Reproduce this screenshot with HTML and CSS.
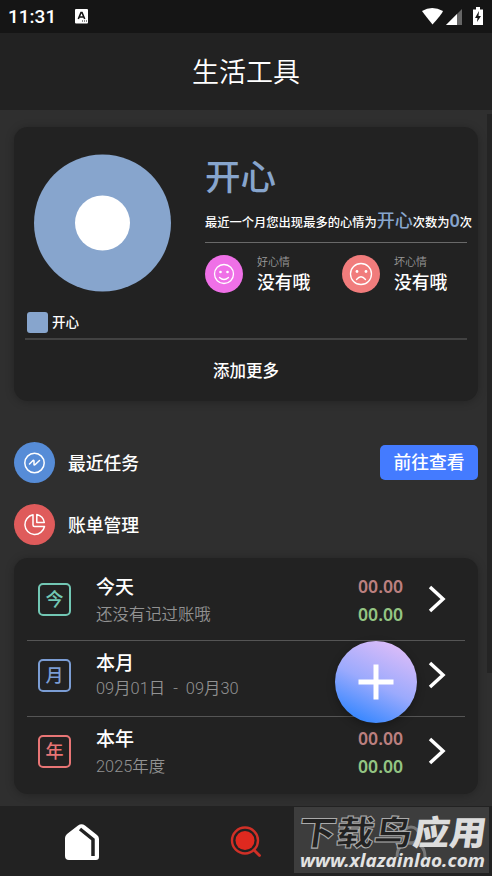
FILE: index.html
```html
<!DOCTYPE html>
<html lang="zh-CN">
<head>
<meta charset="utf-8">
<title>生活工具</title>
<link rel="stylesheet" href="styles.css">
</head>
<body>
<div class="app">
  <div class="status">
    <span class="clock">11:31</span>
    <svg class="keyboard" width="13" height="15" viewBox="0 0 13 15"><rect width="13" height="14.500" rx="1" fill="#fff"/><path d="M3.300 10 6 3.500h1L9.700 10M4.500 8h4" fill="none" stroke="#151515" stroke-width="1.600"/><path d="M7 12h1M9 12h1M11 12h1" stroke="#151515"/></svg>
    <svg class="signals" width="64" height="20" viewBox="0 0 64 20"><path d="M1 4Q11-2 22 4Q21 7 11.500 17.500Q3 7 1 4Z" fill="#fff"/><path d="M25 18 41 2v16Z" fill="#666"/><path d="M25 18 36 7v11Z" fill="#fff"/><path d="M52 2.500h3V0h4v2.500h3V18H52Z" fill="#fff"/><path d="m58 4-4 7h2.500L56 15l4-6h-2.500Z" fill="#151515"/></svg>
  </div>
  <header class="header">生活工具</header>
  <main class="main">
    <section class="card mood">
      <div class="mood-top">
        <svg class="donut" width="138" height="138" viewBox="0 0 138 138"><circle cx="69.500" cy="69" r="68.500" fill="#87a5cd"/><circle cx="69.500" cy="69" r="27.500" fill="#fff"/></svg>
        <div class="summary">
          <div class="mood-name">开心</div>
          <div class="sentence">最近一个月您出现最多的心情为<b>开心</b>次数为<b class="zero">0</b>次</div>
          <div class="faces">
            <div class="face">
              <svg width="38" height="38" viewBox="0 0 38 38"><circle cx="19" cy="19" r="19" fill="#ef70e7"/><g fill="none" stroke="#fff" stroke-width="1.300" stroke-linecap="round"><circle cx="19" cy="19" r="9.500"/><path d="M14.500 22.500q4.500 4 9 0"/></g><circle cx="15.500" cy="17" r="1.300" fill="#fff"/><circle cx="22.500" cy="17" r="1.300" fill="#fff"/></svg>
              <div><p class="face-label">好心情</p><p class="face-value">没有哦</p></div>
            </div>
            <div class="face">
              <svg width="38" height="38" viewBox="0 0 38 38"><circle cx="19" cy="19" r="19" fill="#f17c7c"/><g fill="none" stroke="#fff" stroke-width="1.300" stroke-linecap="round"><circle cx="19" cy="19" r="10.500"/><path d="M14.500 24.500q4.500-5.500 9 0"/></g><circle cx="15" cy="16.500" r="1.400" fill="#fff"/><circle cx="24" cy="16.500" r="1.400" fill="#fff"/></svg>
              <div><p class="face-label">坏心情</p><p class="face-value">没有哦</p></div>
            </div>
          </div>
        </div>
      </div>
      <div class="legend"><i class="swatch"></i>开心</div>
      <div class="more">添加更多</div>
    </section>

    <div class="section tasks">
      <svg width="41" height="41" viewBox="0 0 41 41"><circle cx="20.500" cy="20.500" r="20.500" fill="#568cd7"/><g fill="none" stroke="#fff" stroke-width="1.500" stroke-linecap="round" stroke-linejoin="round"><circle cx="20.500" cy="21" r="9.700"/><path d="M15.500 22 19 18.500q1-.5 1 .5v3.500q.2 1 1 .3l4.500-4.300"/></g></svg>
      <h2>最近任务</h2><button class="go">前往查看</button>
    </div>
    <div class="section bills">
      <svg width="41" height="41" viewBox="0 0 41 41"><circle cx="20.500" cy="20.500" r="20.500" fill="#df5b5b"/><g fill="none" stroke="#fff" stroke-width="1.500" stroke-linejoin="round"><path d="M19 10.800a9.900 9.900 0 1 0 11.500 11.700H20.500q-1.500 0-1.500-1.500Z"/><path d="M22.800 10.500q6.500 1.500 7.500 8h-7.500Z"/></g></svg>
      <h2>账单管理</h2>
    </div>

    <section class="card ledger">
      <div class="row">
        <span class="tile today">今</span>
        <div class="info"><h3>今天</h3><p>还没有记过账哦</p></div>
        <div class="amounts"><span class="out">00.00</span><span class="in">00.00</span></div>
        <svg class="chevron" width="18" height="28" viewBox="0 0 18 28"><path d="m2 2 13 12L2 26"/></svg>
      </div>
      <div class="row">
        <span class="tile month">月</span>
        <div class="info range"><h3>本月</h3><p>09月01日&nbsp; -&nbsp; 09月30</p></div>
        <div class="amounts"><span class="out">00.00</span><span class="in">00.00</span></div>
        <svg class="chevron" width="18" height="28" viewBox="0 0 18 28"><path d="m2 2 13 12L2 26"/></svg>
      </div>
      <div class="row">
        <span class="tile year">年</span>
        <div class="info"><h3>本年</h3><p>2025年度</p></div>
        <div class="amounts"><span class="out">00.00</span><span class="in">00.00</span></div>
        <svg class="chevron" width="18" height="28" viewBox="0 0 18 28"><path d="m2 2 13 12L2 26"/></svg>
      </div>
    </section>
    <i class="scrollbar"></i>
  </main>
  <nav class="nav">
    <svg width="34" height="37" viewBox="0 0 34 37"><path d="M0 14Q0 12 2 10L13 1.500Q16.500-1 20 1.500L32 11q2 1.500 2 4v18q0 3-3 3H4q-4 0-4-4Z" fill="#fff"/><path d="m15 5 13 10.500V32" fill="none" stroke="#222" stroke-width="3.500"/></svg>
    <svg width="32" height="32" viewBox="0 0 32 32"><circle cx="15" cy="14.500" r="9.500" fill="#df291f"/><circle cx="15" cy="14.500" r="13" fill="none" stroke="#d03027" stroke-width="2.400"/><path d="m24 24 5.500 5.500" stroke="#d03027" stroke-width="2.800" stroke-linecap="round"/></svg>
    <svg width="32" height="32" viewBox="0 0 32 32" fill="none" stroke="#aaa" stroke-width="3"><circle cx="16" cy="9" r="8"/><path d="M2 31q0-14 14-14t14 14"/></svg>
  </nav>
  <button class="fab" aria-label="add"><svg width="36" height="36" viewBox="0 0 36 36"><path d="M18 .5v35M.5 18h35" stroke="#fff" stroke-width="5"/></svg></button>
  <div class="watermark">
    <svg width="195" height="66" viewBox="0 0 195 66">
      <g fill="none" stroke="#777" stroke-width="3"><circle cx="117" cy="28" r="8"/><path d="M103 50q0-14 14-14t14 14"/></g>
      <g transform="skewX(-8)"><text class="mark-cn hollow" x="8" y="38" textLength="114" lengthAdjust="spacingAndGlyphs">下载鸟</text><text class="mark-cn solid" x="123" y="38" textLength="73" lengthAdjust="spacingAndGlyphs">应用</text></g>
      <text class="mark-url" x="6" y="60" textLength="185" lengthAdjust="spacingAndGlyphs">www.xlazainlao.com</text>
    </svg>
  </div>
</div>
</body>
</html>
```
FILE: styles.css
```css
* { box-sizing: border-box; margin: 0; padding: 0; }
body {
  background: #2f2f2f;
  color: #fff;
  font-family: Roboto, "Noto Sans CJK SC", sans-serif;
  font-weight: 500;
}
svg { display: block; flex: none; }
button { border: 0; color: inherit; font: inherit; }
.app { position: relative; width: 492px; height: 876px; overflow: hidden; display: flex; flex-direction: column; }
.status { flex: none; height: 33px; background: #151515; display: flex; align-items: center; padding: 0 8px; }
.clock { font-size: 19px; line-height: 32px; width: 67px; padding-top: 1px; }
.signals { margin-left: auto; margin-right: -1px; }
.header { flex: none; height: 77px; background: #222; font-size: 27px; font-weight: 350; font-family: "Noto Sans CJK SC", sans-serif; line-height: 75px; text-align: center; }
.main { position: relative; flex: none; height: 696px; padding: 17px 14px 0; }
.card { background: #222; border-radius: 14px; box-shadow: 0 1px 9px rgba(0, 0, 0, .25); }
.mood { height: 274px; padding: 27px 11px 0; }
.mood-top { display: flex; height: 155px; padding-left: 8px; }
.donut { margin-right: 34px; }
.summary { width: 262px; padding-top: 4px; }
.mood-name { color: #87a5cd; font-size: 35.500px; line-height: 40px; }
.sentence { height: 47px; margin-top: 5px; line-height: 36px; font-size: 12.270px; white-space: nowrap; }
.sentence b { font-size: 18px; font-weight: 500; color: #87a5cd; }
.sentence .zero { font-family: "Noto Sans", sans-serif; font-weight: 600; line-height: 20px; }
.faces { display: flex; border-top: 1px solid #696969; margin-top: -8px; padding-top: 12px; }
.face { display: flex; gap: 14px; width: 137px; flex: none; white-space: nowrap; }
.face-label { color: #999; font-size: 11px; font-weight: 350; line-height: 15px; }
.face-value { font-size: 17.800px; line-height: 26px; }
.legend { display: flex; align-items: center; gap: 4px; height: 31px; padding: 0 0 3px 2px; font-size: 13.500px; border-bottom: 2px solid #424242; line-height: 18px; }
.swatch { width: 21px; height: 21px; border-radius: 3px; background: #87a5cd; }
.more { text-align: center; font-size: 16.500px; line-height: 64px; }
.section { display: flex; align-items: center; height: 41px; }
.tasks { margin-top: 41px; }
.bills { margin-top: 21px; }
.section h2 { margin: 0 0 2px 13px; font-size: 17.800px; font-weight: 500; }
.go { width: 98px; height: 35px; margin-left: auto; border-radius: 5px; background: #447bff; font-size: 17.800px; line-height: 36px; }
.ledger { height: 236px; margin-top: 13px; padding: 7px 13px 0; }
.row { display: flex; height: 76px; padding: 0 19px 0 11px; border-bottom: 1px solid #555; }
.row:last-child { border: 0; }
.tile { width: 33px; height: 33px; margin: 18px 25px 0 0; border: 2px solid; border-radius: 5px; text-align: center; font-size: 18px; line-height: 29px; }
.today { color: #72c7b4; }
.month { color: #7b9dd4; }
.year { color: #e87575; }
.info { flex: 1; padding-top: 9px; white-space: nowrap; }
.info h3 { font-size: 19px; font-weight: 500; line-height: 27px; }
.info p { color: #929292; font-size: 16.400px; font-weight: 350; line-height: 28px; }
.range p { line-height: 23px; }
.amounts { width: 46px; margin-right: 24px; padding-top: 7px; font: 600 17.600px/28px "Noto Sans", sans-serif; }
.amounts span { display: block; }
.out { color: #bd8080; }
.in { color: #94c583; }
.chevron { margin-top: 20px; fill: none; stroke: #fff; stroke-width: 3.500; }
.scrollbar { position: absolute; top: 4px; right: 0; width: 5px; height: 559px; background: #242424; }
.nav { flex: none; height: 70px; background: #222; display: flex; justify-content: space-around; align-items: center; padding: 2px 2px 0 0; }
.fab { position: absolute; left: 335px; top: 641px; width: 82px; height: 82px; border-radius: 50%; display: grid; place-items: center; background: linear-gradient(205deg, #dfbdf8 8%, #9baafd 52%, #3185ff 91%); box-shadow: 0 3px 8px rgba(0, 0, 0, .3); }
.watermark { position: absolute; left: 294px; top: 807px; width: 195px; height: 66px; background: #3d3d3d; }
.mark-cn { font: 900 34px "Noto Sans CJK SC", sans-serif; }
.hollow { fill: #222; stroke: #aaa; stroke-width: 1; }
.solid { fill: #ddd; }
.mark-url { font: italic 700 18px "Noto Sans", sans-serif; fill: #e2e2e2; }
```
